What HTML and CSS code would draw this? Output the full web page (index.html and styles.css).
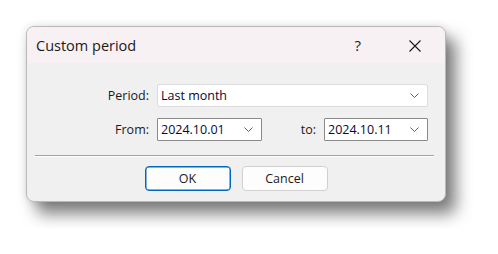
FILE: index.html
```html
<!DOCTYPE html>
<html lang="en">
<head>
    <meta charset="UTF-8">
    <title>Custom period</title>
    <link rel="stylesheet" href="styles.css">
</head>
<body>
    <div class="dialog">
        <div class="titlebar">
            <span class="title">Custom period</span>
            <span class="help">?</span>
            <span class="close">
                <svg width="12" height="12" viewBox="0 0 12 12"><path d="M0.5 0.5 L11.5 11.5 M11.5 0.5 L0.5 11.5" stroke="#1a1a1a" stroke-width="1.1" fill="none"/></svg>
            </span>
        </div>
        <div class="content">
            <div class="form">
                <label class="lbl">Period:</label>
                <div class="combo wide">
                    <span>Last month</span>
                    <svg class="chev" width="9" height="5" viewBox="0 0 9 5"><path d="M0.5 0.5 L4.5 4.5 L8.5 0.5" stroke="#606060" fill="none"/></svg>
                </div>
                <label class="lbl">From:</label>
                <div class="combo date">
                    <span>2024.10.01</span>
                    <svg class="chev" width="9" height="5" viewBox="0 0 9 5"><path d="M0.5 0.5 L4.5 4.5 L8.5 0.5" stroke="#606060" fill="none"/></svg>
                </div>
                <label class="lbl">to:</label>
                <div class="combo date">
                    <span>2024.10.11</span>
                    <svg class="chev" width="9" height="5" viewBox="0 0 9 5"><path d="M0.5 0.5 L4.5 4.5 L8.5 0.5" stroke="#606060" fill="none"/></svg>
                </div>
            </div>
            <div class="separator"></div>
            <div class="buttons">
                <button class="btn default">OK</button>
                <button class="btn">Cancel</button>
            </div>
        </div>
    </div>
</body>
</html>
```
FILE: styles.css
```css
body {
    margin: 0;
    padding: 26px;
    background-color: #fff;
    font-family: 'Open Sans', 'Noto Sans', sans-serif;
    font-size: 12.5px;
    color: #000;
}
.dialog {
    width: 420px;
    height: 176px;
    box-sizing: border-box;
    border: 1px solid #b9b9b9;
    border-radius: 8px;
    background-color: #f0f0f0;
    box-shadow: 10px 12px 16px rgba(0, 0, 0, 0.5), 0 0 8px rgba(0, 0, 0, 0.12);
    overflow: hidden;
    display: flex;
    flex-direction: column;
}
.titlebar {
    height: 36px;
    background-color: #f8f1f4;
    display: flex;
    align-items: center;
    padding-left: 9px;
    padding-right: 24px;
}
.title {
    font-size: 14.5px;
    flex: 1;
    color: #1a1a1a;
}
.help {
    font-size: 15px;
    color: #1a1a1a;
    margin-right: 48px;
}
.close {
    display: flex;
    margin-top: 1px;
}
.content {
    flex: 1;
    display: flex;
    flex-direction: column;
}
.form {
    display: grid;
    grid-template-columns: 130px 105px 62px 104px;
    grid-auto-rows: 23px;
    row-gap: 11px;
    margin-top: 21px;
}
.lbl {
    text-align: right;
    padding-right: 8px;
    line-height: 23px;
    color: #1a1a1a;
}
.combo {
    box-sizing: border-box;
    background-color: #fff;
    display: flex;
    align-items: center;
    justify-content: space-between;
    padding: 0 8px 0 3px;
    color: #0a0a30;
}
.wide {
    grid-column: 2 / 5;
    border: 1px solid #dcdcdc;
    border-radius: 2px;
}
.date {
    border: 1px solid #8a8a8a;
    border-radius: 1px;
}
.chev {
    display: block;
}
.separator {
    margin: 14px 11px 0 8px;
    height: 1px;
    background-color: #a0a0a0;
    border-bottom: 1px solid #fff;
}
.buttons {
    display: flex;
    justify-content: center;
    gap: 11px;
    margin-top: 9px;
}
.btn {
    width: 86px;
    height: 25px;
    font-family: inherit;
    font-size: 12.5px;
    color: #1a1a1a;
    background-color: #fdfdfd;
    border: 1px solid #d0d0d0;
    border-radius: 4px;
    padding: 0;
}
.btn.default {
    border: 1px solid #0067c0;
    box-shadow: inset 0 0 0 0.5px #0067c0;
}
```
